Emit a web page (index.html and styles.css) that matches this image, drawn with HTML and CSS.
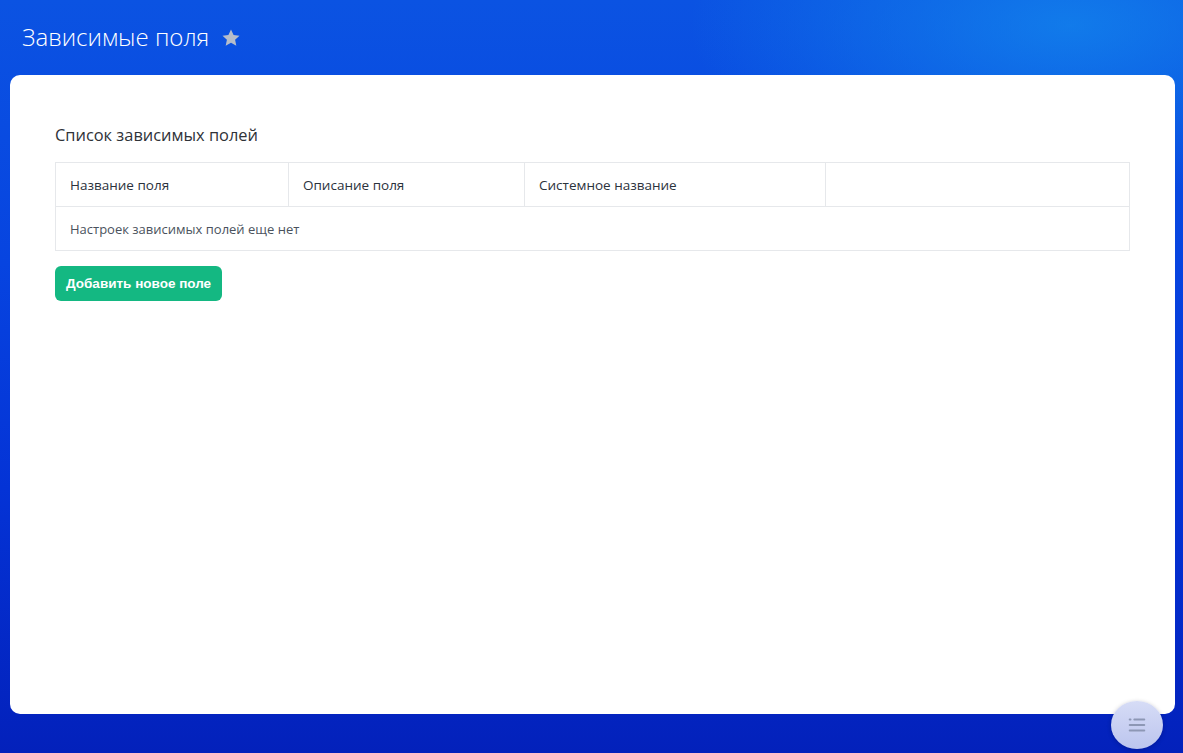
FILE: index.html
```html
<!DOCTYPE html>
<html lang="ru">
<head>
<meta charset="utf-8">
<title>Зависимые поля</title>
<link rel="stylesheet" href="styles.css">
</head>
<body>
<header class="top">
  <h1 class="page-title">Зависимые поля</h1>
  <svg class="star" viewBox="0 0 24 24" width="20" height="20"><path d="M12 1.8l3.1 6.6 7.1.8-5.3 4.9 1.5 7.1L12 17.6l-6.4 3.6 1.5-7.1L1.8 9.2l7.1-.8z" fill="#b6bdca"/></svg>
</header>
<main class="card">
  <h2 class="section-title">Список зависимых полей</h2>
  <table class="grid">
    <thead>
      <tr>
        <th class="c1">Название поля</th>
        <th class="c2">Описание поля</th>
        <th class="c3">Системное название</th>
        <th class="c4"></th>
      </tr>
    </thead>
    <tbody>
      <tr><td colspan="4">Настроек зависимых полей еще нет</td></tr>
    </tbody>
  </table>
  <button class="btn-add" type="button">Добавить новое поле</button>
</main>
<div class="fab">
  <svg viewBox="0 0 24 24" width="22" height="22"><rect x="3" y="5" width="3" height="2" rx="1" fill="#8d97b5"/><rect x="8" y="5" width="13" height="2" rx="1" fill="#8d97b5"/><rect x="3" y="11" width="18" height="2" rx="1" fill="#8d97b5"/><rect x="3" y="17" width="18" height="2" rx="1" fill="#8d97b5"/></svg>
</div>
</body>
</html>
```
FILE: styles.css
```css
html, body {
  margin: 0;
  padding: 0;
  height: 100%;
}
body {
  font-family: "Open Sans", "Noto Sans", sans-serif;
  background:
    radial-gradient(ellipse 380px 170px at 1070px 25px, rgba(20, 140, 238, 0.7), rgba(20, 140, 238, 0) 100%),
    linear-gradient(180deg, #0b53e2 0%, #0744e0 35%, #0433d6 65%, #0321bb 100%);
  overflow: hidden;
  height: 753px;
  position: relative;
}
.top {
  height: 75px;
  display: flex;
  align-items: center;
  padding-left: 22px;
  box-sizing: border-box;
  padding-bottom: 2px;
}
.page-title {
  margin: 0;
  font-size: 24px;
  font-weight: 300;
  color: #ffffff;
}
.star {
  margin-left: 12px;
  margin-top: 2px;
}
.card {
  margin: 0 8px 0 10px;
  height: 639px;
  box-sizing: border-box;
  background: #ffffff;
  border-radius: 10px;
  padding: 48px 45px 0 45px;
}
.section-title {
  margin: 0 0 15px 0;
  font-size: 16.4px;
  font-weight: 400;
  line-height: 24px;
  color: #2f3238;
}
.grid {
  width: 100%;
  border-collapse: collapse;
  font-size: 13px;
}
.grid th, .grid td {
  border: 1px solid #e6e8eb;
  height: 44px;
  padding: 0 14px;
  text-align: left;
  box-sizing: border-box;
}
.grid th {
  font-size: 13.5px;
  font-weight: 400;
  color: #2b323c;
}
.grid td {
  color: #4a525d;
}
.c1 { width: 233px; }
.c2 { width: 236px; }
.c3 { width: 301px; }
.btn-add {
  margin-top: 15px;
  height: 35px;
  padding: 0 11px;
  background: #14b882;
  border: none;
  border-radius: 6px;
  color: #ffffff;
  font-family: "Liberation Sans", Arial, sans-serif;
  font-weight: 700;
  font-size: 13.5px;
  cursor: pointer;
}
.fab {
  position: absolute;
  left: 1111px;
  top: 701px;
  width: 52px;
  height: 48px;
  border-radius: 50%;
  background: linear-gradient(180deg, #d6dcf6 0%, #bcc5ee 100%);
  display: flex;
  align-items: center;
  justify-content: center;
  box-shadow: 0 1px 4px rgba(0, 0, 40, 0.25);
}
```
